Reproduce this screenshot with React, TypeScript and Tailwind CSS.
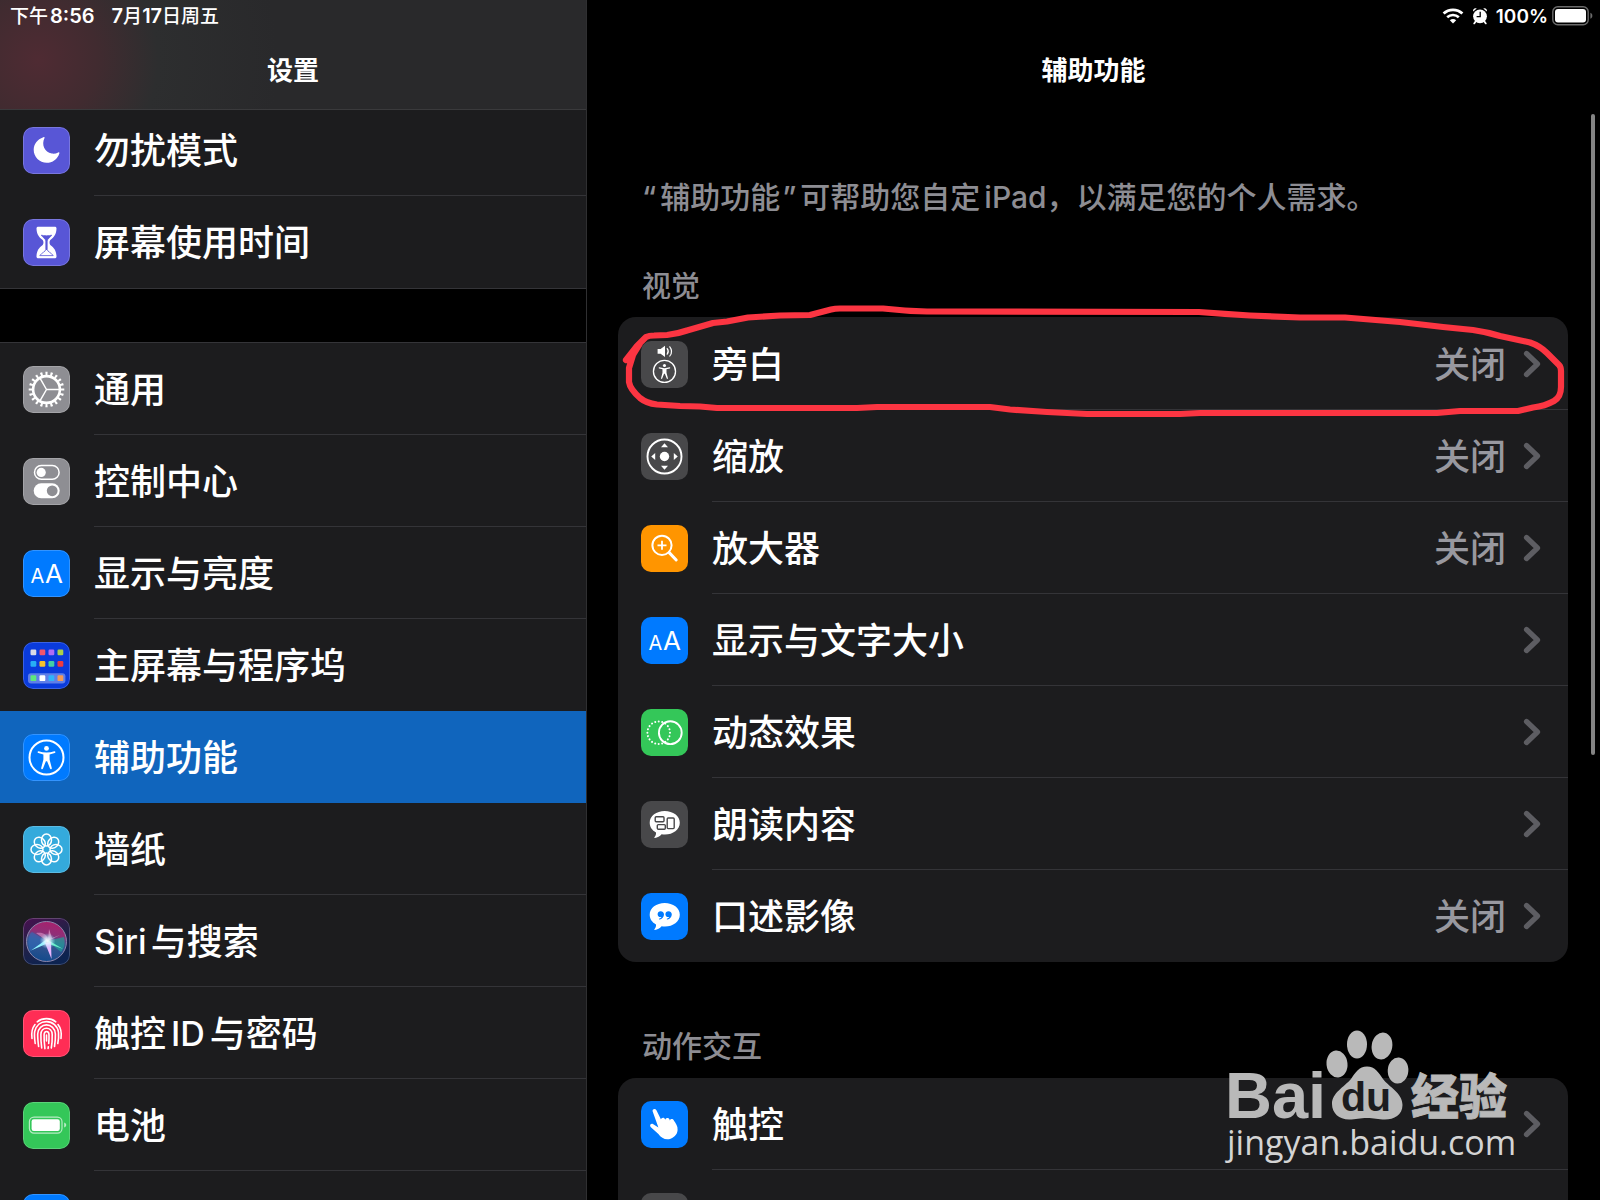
import type { ReactNode } from "react";

const dots = ["#d8dbe6", "#f2556b", "#b06cf5", "#a9d14a", "#27aef5", "#f7c12d", "#43cfa5", "#ee3b3f", "#5ee87c", "#ffffff", "#2fb4fa", "#f59a55"];
const dotX = [7.5, 16.5, 25.5, 34.5];
const dotY = [7.5, 19, 33.3];
const petals = [0, 45, 90, 135, 180, 225, 270, 315];

function Glyph({ children }: { children: ReactNode }) {
  return (
    <svg viewBox="0 0 47 47" className="block size-full" fill="none" stroke="none" aria-hidden="true">
      {children}
    </svg>
  );
}

function Tile({ color, rim, children }: { color: string; rim?: boolean; children?: ReactNode }) {
  return (
    <span className={`relative block size-[47px] shrink-0 overflow-hidden rounded-[10px] ${color}`}>
      {children}
      {rim && <span className="absolute inset-0 rounded-[10px] border border-white/20" />}
    </span>
  );
}

function Person() {
  return (
    <>
      <circle cx="23.5" cy="23.5" r="17" stroke="#fff" strokeWidth="2" />
      <circle cx="23.5" cy="14.4" r="2.4" fill="#fff" />
      <path
        d="M15.6 17.3 C20.5 18.9 26.5 18.9 31.4 17.3 C32.5 17.1 32.8 18.7 31.7 19.1 L26.6 20.4 V25.6 L28.8 34 C29 35.2 27.4 35.6 27 34.5 L24.1 27.2 H22.9 L20 34.5 C19.6 35.6 18 35.2 18.2 34 L20.4 25.6 V20.4 L15.3 19.1 C14.2 18.7 14.5 17.1 15.6 17.3 Z"
        fill="#fff"
      />
    </>
  );
}

const Moon = () => (
  <Glyph>
    <path d="M20.4 10.2 C14.2 12.4 10.7 17.3 10.7 22.8 C10.7 30 16.5 35.8 23.7 35.8 C29.4 35.8 34.6 32.2 36.4 26.2 C36.6 25.3 36 25 35.2 25.4 C33.2 26.5 31 27 28.8 26.6 C21.5 25.4 18.2 17.6 21.5 11.1 C21.8 10.4 21.2 9.9 20.4 10.2 Z" fill="#fff" />
  </Glyph>
);

const Hourglass = () => (
  <Glyph>
    <path d="M15.5 7.8 H31.5 C33 7.8 33.6 8.6 33.5 9.8 C33.2 15.5 31.2 18 27.6 20.8 C26.2 22 26.2 25 27.6 26.2 C31.2 29 33.2 31.5 33.5 37.2 C33.6 38.4 33 39.2 31.5 39.2 H15.5 C14 39.2 13.4 38.4 13.5 37.2 C13.8 31.5 15.8 29 19.4 26.2 C20.8 25 20.8 22 19.4 20.8 C15.8 18 13.8 15.5 13.5 9.8 C13.4 8.6 14 7.8 15.500 7.800 Z" fill="#fff" />
    <path d="M18.3 16.2 C20 16.8 27 16.8 28.7 16.2 C27.5 18.3 24.4 19.5 24.2 22 V30.5 C24.6 33 28 33.3 30.2 36.6 H16.8 C19 33.3 22.4 33 22.8 30.5 V22 C22.6 19.5 19.5 18.3 18.3 16.2 Z" stroke="#5856d6" strokeWidth="0.8" fill="#fff" />
    <path d="M18.6 16.2 C20 17.1 27 17.1 28.4 16.2 C27.5 18 25.6 19 24.4 21 H22.6 C21.4 19 19.5 18 18.6 16.2 Z" fill="#5856d6" />
    <path d="M23.5 20 V31" stroke="#5856d6" strokeWidth="1.2" />
  </Glyph>
);

const Gear = () => (
  <Glyph>
    <circle cx="23.5" cy="23.5" r="13.4" stroke="#fff" strokeWidth="2.6" />
    <circle cx="23.5" cy="23.5" r="16" stroke="#fff" strokeWidth="3.6" pathLength="40" strokeDasharray="0.84 1.16" strokeDashoffset="0.42" />
    <path d="M23.5 23.5 H37 M23.5 23.5 L16.7 11.7 M23.5 23.5 L16.7 35.3" stroke="#fff" strokeWidth="1.5" />
  </Glyph>
);

const Toggles = () => (
  <Glyph>
    <rect x="11.5" y="7.6" width="24.6" height="13.6" rx="6.8" stroke="#fff" strokeWidth="1.5" />
    <circle cx="18.2" cy="14.4" r="4.6" fill="#fff" />
    <rect x="10.7" y="25.3" width="26" height="15" rx="7.5" fill="#fff" />
    <circle cx="29.2" cy="32.8" r="5.4" fill="#8e8e93" />
  </Glyph>
);

const LetterSizes = () => (
  <Glyph>
    <text x="7.5" y="33.3" fontFamily="Inter, sans-serif" fontWeight="400" fontSize="20" fill="#fff">A</text>
    <text x="22" y="33.3" fontFamily="Inter, sans-serif" fontWeight="400" fontSize="26" fill="#fff">A</text>
  </Glyph>
);

const HomeGrid = () => (
  <Glyph>
    <rect x="5" y="31.2" width="37.4" height="10.4" rx="3" fill="#fff" fillOpacity="0.35" />
    {dots.map((c, i) => (
      <rect key={i} x={dotX[i % 4]} y={dotY[Math.floor(i / 4)]} width="5.8" height="5.8" rx="1.2" fill={c} />
    ))}
  </Glyph>
);

const Flower = () => (
  <Glyph>
    {petals.map((a) => (
      <ellipse key={a} cx="23.5" cy="14" rx="5" ry="6" transform={`rotate(${a} 23.5 23.5)`} stroke="#fff" strokeWidth="1.5" />
    ))}
  </Glyph>
);

const Siri = () => (
  <Glyph>
    <defs>
      <linearGradient id="siri-bg" x1="0" y1="0" x2="0.4" y2="1">
        <stop offset="0" stopColor="#4a0f50" />
        <stop offset="0.5" stopColor="#252047" />
        <stop offset="1" stopColor="#0d2350" />
      </linearGradient>
      <linearGradient id="siri-orb" x1="0.6" y1="0" x2="0.4" y2="1">
        <stop offset="0" stopColor="#a8206c" />
        <stop offset="0.3" stopColor="#8f2f78" />
        <stop offset="0.5" stopColor="#3c5690" />
        <stop offset="1" stopColor="#124a8c" />
      </linearGradient>
      <radialGradient id="siri-glow">
        <stop offset="0" stopColor="#fff" />
        <stop offset="0.4" stopColor="#dff6ff" stopOpacity="0.75" />
        <stop offset="1" stopColor="#9fd8ff" stopOpacity="0" />
      </radialGradient>
    </defs>
    <rect width="47" height="47" fill="url(#siri-bg)" />
    <circle cx="23.5" cy="23.5" r="20" fill="url(#siri-orb)" stroke="#8d86ab" strokeWidth="1" />
    <path d="M24 23 L41 19 C43 26 40 32 38 34 Z" fill="#20a59a" opacity="0.65" />
    <path d="M24 23 L7 33 C4 25 5 17 9 14 Z" fill="#2f6cbd" opacity="0.6" />
    <path d="M24 23 L13 15 C20 14 24 16 25 22 Z" fill="#f29ad0" opacity="0.55" />
    <path d="M25 23 L26 11 L29 20 L37 17 Z" fill="#f4b9de" opacity="0.6" />
    <path d="M24 21 L8 32.500 L23 26 Z" fill="#8df5ff" />
    <path d="M25 22 L40 31 L26 26 Z" fill="#66f0c8" />
    <path d="M22 25 L28.5 41 L28 24 Z" fill="#e9b6ff" />
    <circle cx="24.5" cy="23" r="8" fill="url(#siri-glow)" />
  </Glyph>
);

const Print = () => (
  <Glyph>
    <g stroke="#fff" strokeWidth="1.6" strokeLinecap="round">
      <path d="M14.2 11.800 C19.500 7.600 27.500 7.600 32.800 11.800" />
      <path d="M9 28.500 C8.100 22.500 9.200 18 12 14.500 M35 14.500 C37.800 18 38.900 22.500 38 28.500" />
      <path d="M12.200 33.500 C11.300 27 11.200 24 11.700 21.500 C13.200 15 18 11.600 23.500 11.600 C29.500 11.600 34.800 16 35.500 22.500 C35.800 26 35.500 30 34.800 33.500" />
      <path d="M15.600 36.500 C14.900 31 14.600 27 14.700 24 C15 18.500 19 14.900 23.500 14.900 C28 14.900 32.200 18.500 32.400 24 C32.500 28 32.300 32 31.500 36.500" />
      <path d="M18.700 38 C18.100 33 17.800 28 17.900 24.500 C18 20.500 20.500 18.200 23.500 18.200 C26.500 18.200 29.100 20.500 29.200 24.500 C29.300 29 29.100 33.500 28.300 38" />
      <path d="M21.900 38.600 C21.300 34 21 28.500 21.100 24.800 C21.200 22.500 22.200 21.500 23.500 21.500 C24.900 21.500 26 22.500 26 24.800 C26.100 28 26 30.500 25.700 33.500 M25.300 36.800 L25.100 38.500" />
      <path d="M23.500 25 V31" />
    </g>
  </Glyph>
);

const BatteryTile = () => (
  <Glyph>
    <rect x="6.4" y="15.1" width="32.6" height="16" rx="4.6" stroke="#fff" strokeOpacity="0.65" strokeWidth="1.2" />
    <rect x="8.6" y="17.2" width="28.2" height="11.8" rx="2.2" fill="#fff" />
    <path d="M41.2 20.6 C43.9 21.6 43.9 24.6 41.2 25.6 Z" fill="#fff" fillOpacity="0.65" />
  </Glyph>
);

const Accessibility = () => (
  <Glyph>
    <Person />
  </Glyph>
);

const VoiceOver = () => (
  <Glyph>
    <path d="M16.6 8 H19.6 L24 4.8 V16 L19.6 12.8 H16.6 Z" fill="#fff" />
    <path d="M26.2 7.6 C27.5 9.3 27.5 11.5 26.2 13.2 M28.8 5.8 C31 8.6 31 12.2 28.8 15" stroke="#fff" strokeWidth="1.2" strokeLinecap="round" />
    <g transform="translate(8.2 15.1) scale(0.65)">
      <Person />
    </g>
  </Glyph>
);

const ZoomPad = () => (
  <Glyph>
    <circle cx="23.5" cy="23.5" r="17" stroke="#fff" strokeWidth="1.9" />
    <circle cx="23.5" cy="23.5" r="4.7" fill="#fff" />
    <path d="M23.5 10.2 L27 14.2 H20 Z M23.5 36.8 L27 32.8 H20 Z M10.2 23.5 L14.2 20 V27 Z M36.8 23.5 L32.8 20 V27 Z" fill="#fff" />
  </Glyph>
);

const Magnifier = () => (
  <Glyph>
    <circle cx="21" cy="20.3" r="9.6" stroke="#fff" strokeWidth="2" />
    <path d="M21 15.8 V24.8 M16.5 20.3 H25.5" stroke="#fff" strokeWidth="1.8" />
    <path d="M28.2 27.6 L35.2 35" stroke="#fff" strokeWidth="3" strokeLinecap="round" />
  </Glyph>
);

const Motion = () => (
  <Glyph>
    <circle cx="17.7" cy="23.7" r="11.3" stroke="#fff" strokeWidth="2" strokeLinecap="round" pathLength="40" strokeDasharray="0.01 1.99" />
    <circle cx="29.3" cy="23.7" r="11.4" stroke="#fff" strokeWidth="1.9" />
  </Glyph>
);

const Bubble = () => (
  <path d="M23.7 10 C32 10 38.8 15 38.8 21.8 C38.8 28.6 32 33.6 24 33.6 C22.8 33.6 21.6 33.5 20.6 33.3 C18.8 35.3 16.4 36.8 14 37 C13.2 37 13.1 36.4 13.6 35.9 C14.6 34.7 15.2 33 15 31.4 C11.2 29.5 8.7 26 8.7 21.8 C8.7 15 15.4 10 23.7 10 Z" fill="#fff" />
);

const SpokenContent = () => (
  <Glyph>
    <Bubble />
    <g stroke="#48484a" strokeWidth="1.4">
      <rect x="14.2" y="15.8" width="8.8" height="5" rx="1" />
      <rect x="16.3" y="23.6" width="8" height="4.6" rx="1" />
      <rect x="26.2" y="17" width="7" height="10.6" rx="1" />
    </g>
  </Glyph>
);

const Quotes = () => (
  <Glyph>
    <Bubble />
    <path d="M19.6 18.2 C21.8 18.2 23 19.8 23 21.6 C23 24.2 21 26.3 18.6 26.6 C17.9 26.6 17.8 25.9 18.4 25.6 C19.5 25.1 20.2 24.4 20.4 23.9 C18.2 24.6 16.6 23 16.6 21.2 C16.6 19.5 17.9 18.2 19.6 18.2 Z" fill="#007aff" />
    <path d="M27.4 18.2 C29.6 18.2 30.8 19.8 30.8 21.6 C30.8 24.2 28.8 26.3 26.4 26.6 C25.7 26.6 25.6 25.9 26.2 25.6 C27.3 25.1 28 24.4 28.2 23.9 C26 24.6 24.4 23 24.4 21.2 C24.4 19.5 25.7 18.2 27.4 18.2 Z" fill="#007aff" />
  </Glyph>
);

const Hand = () => (
  <Glyph>
    <path d="M11.6 10.2 C11.2 8 14.3 7 15.3 9.1 L20 18.6 C20.2 16.4 23 15.9 23.9 18 L24.2 18.8 C24.8 16.6 27.9 16.3 28.6 18.6 L28.8 19.4 C29.7 17.4 32.4 17.6 33 19.8 C34.8 22.6 36.9 25 36.6 29 C36.3 34 32.5 37 28 38.2 C23.5 38.9 20 36.6 17.4 33 L9.6 25.9 C8.3 24 9.8 22.3 11.9 22.9 L17.4 26.4 Z" fill="#fff" />
  </Glyph>
);

type Item = { label?: ReactNode; name?: string; tile: ReactNode; value?: string; current?: boolean };

function SideRow({ label, name, tile, current, divider, first }: Item & { divider: boolean; first?: boolean }) {
  return (
    <li className={first ? "-mt-1.5" : ""}>
      <button
        type="button"
        aria-label={name}
        aria-current={current ? "page" : undefined}
        className={`flex h-[92px] w-full items-center pl-[23px] text-left ${current ? "bg-[#1065bd]" : ""}`}
      >
        {tile}
        <span className={`ml-6 flex h-full flex-1 items-center border-b pt-[3px] text-4xl whitespace-nowrap ${divider ? "border-[#343438]" : "border-transparent"}`}>
          {label}
        </span>
      </button>
    </li>
  );
}

function Chevron() {
  return (
    <svg viewBox="0 0 18 28" className="h-7 w-[18px] shrink-0" fill="none" aria-hidden="true">
      <path d="M3.5 3.5 L14.5 14 L3.5 24.5" stroke="#5d5d62" strokeWidth="5.2" strokeLinecap="round" strokeLinejoin="round" />
    </svg>
  );
}

function MainRow({ label, name, tile, value, divider }: Item & { divider: boolean }) {
  return (
    <li>
      <button type="button" aria-label={name} className="flex h-[92px] w-full items-center pl-[23px] text-left">
        {tile}
        <span className={`ml-6 flex h-full flex-1 items-center gap-[17px] border-b pr-[27px] text-4xl whitespace-nowrap ${divider ? "border-[#343438]" : "border-transparent"}`}>
          <span className="flex-1 pt-[3px]">{label}</span>
          {value && <span className="pt-[3px] text-[#98989f]">{value}</span>}
          {label && <Chevron />}
        </span>
      </button>
    </li>
  );
}

const topItems: Item[] = [
  { label: "勿扰模式", tile: <Tile rim color="bg-[#5856d6]"><Moon /></Tile> },
  { label: "屏幕使用时间", tile: <Tile rim color="bg-[#5856d6]"><Hourglass /></Tile> },
];

const sideItems: Item[] = [
  { label: "通用", tile: <Tile rim color="bg-[#8e8e93]"><Gear /></Tile> },
  { label: "控制中心", tile: <Tile rim color="bg-[#8e8e93]"><Toggles /></Tile> },
  { label: "显示与亮度", tile: <Tile rim color="bg-[#007aff]"><LetterSizes /></Tile> },
  { label: "主屏幕与程序坞", tile: <Tile rim color="bg-[#0a3bdc]"><HomeGrid /></Tile> },
  { label: "辅助功能", current: true, tile: <Tile rim color="bg-[#007aff]"><Accessibility /></Tile> },
  { label: "墙纸", tile: <Tile rim color="bg-[#34aadc]"><Flower /></Tile> },
  { label: <><span className="mr-1 text-[34px]">Siri</span>与搜索</>, tile: <Tile rim color="bg-[#252047]"><Siri /></Tile> },
  { label: <>触控<span className="mx-[5px] text-[34px]">ID</span>与密码</>, tile: <Tile rim color="bg-[#ff2d55]"><Print /></Tile> },
  { label: "电池", tile: <Tile rim color="bg-[#34c759]"><BatteryTile /></Tile> },
  { name: "隐私", tile: <Tile rim color="bg-[#007aff]" /> },
];

const visionItems: Item[] = [
  { label: "旁白", value: "关闭", tile: <Tile color="bg-[#48484a]"><VoiceOver /></Tile> },
  { label: "缩放", value: "关闭", tile: <Tile color="bg-[#48484a]"><ZoomPad /></Tile> },
  { label: "放大器", value: "关闭", tile: <Tile color="bg-[#ff9500]"><Magnifier /></Tile> },
  { label: "显示与文字大小", tile: <Tile color="bg-[#007aff]"><LetterSizes /></Tile> },
  { label: "动态效果", tile: <Tile color="bg-[#34c759]"><Motion /></Tile> },
  { label: "朗读内容", tile: <Tile color="bg-[#48484a]"><SpokenContent /></Tile> },
  { label: "口述影像", value: "关闭", tile: <Tile color="bg-[#007aff]"><Quotes /></Tile> },
];

const motorItems: Item[] = [
  { label: "触控", tile: <Tile color="bg-[#007aff]"><Hand /></Tile> },
  { name: "切换控制", tile: <Tile color="bg-[#48484a]" /> },
];

function StatusIcons() {
  return (
    <div className="flex h-8 items-center justify-end pr-1.5 text-[19px] font-semibold">
      <svg viewBox="0 0 22 16" className="mr-2 h-4 w-[22px]" fill="none" aria-label="Wi-Fi" role="img">
        <path d="M1.6 5.6 C6.8 0.6 15.2 0.6 20.4 5.6" stroke="#fff" strokeWidth="2.8" />
        <path d="M5.2 9.3 C8.4 6.2 13.6 6.2 16.8 9.3" stroke="#fff" strokeWidth="2.6" />
        <path d="M11 15.4 L7.8 12.2 C9.6 10.5 12.4 10.5 14.2 12.2 Z" fill="#fff" />
      </svg>
      <svg viewBox="0 0 16 18" className="mr-2 h-[18px] w-4" fill="none" aria-label="Alarm" role="img">
        <circle cx="8" cy="9.3" r="6.9" fill="#fff" />
        <path d="M1.2 4.4 C0.4 2.4 2.6 0.4 4.7 1.4 Z M14.8 4.4 C15.6 2.4 13.4 0.4 11.3 1.4 Z" fill="#fff" />
        <path d="M3.6 14.4 L2.2 16.4 M12.4 14.4 L13.8 16.4" stroke="#fff" strokeWidth="1.8" strokeLinecap="round" />
        <path d="M8.2 4.8 V9.6 H4.6" stroke="#000" strokeWidth="1.3" />
      </svg>
      <span>100%</span>
      <svg viewBox="0 0 42 20" className="ml-1 h-5 w-[42px]" fill="none" aria-label="Battery" role="img">
        <rect x="0.8" y="0.8" width="35.4" height="18" rx="5" stroke="#6b6b6b" strokeWidth="1.4" />
        <rect x="3" y="3" width="31" height="13.6" rx="3" fill="#fff" />
        <path d="M38.4 6.8 C41 7.8 41 11.8 38.4 12.8 Z" fill="#6b6b6b" />
      </svg>
    </div>
  );
}

function RedLoop() {
  return (
    <svg viewBox="0 0 950 92" preserveAspectRatio="none" className="pointer-events-none absolute top-0 left-0 h-[92px] w-full overflow-visible" fill="none" aria-hidden="true">
      <path
        transform="translate(-618 -317)"
        d="M626 360 L637 346 L646 337 Q649 335.5 654 335.5 L667 335 Q677 334 687 330.5 L713 323 L727 321.5 L748 317.5 L780 315.5 L810 315 L831 309.5 Q835 308.5 840 308.5 L883 308.5 Q905 311 927 311.5 L1199 312 Q1225 314 1250 315.5 L1300 317.5 H1345 L1400 322 L1443 327 L1473 330 Q1487 332 1500 336 L1530 342.5 Q1540 346 1547 353 L1559 365 Q1561 367 1561 371 V387 Q1561 397 1554 401 Q1545 406 1533 407.5 L1518 411 H1460 L1437 413 H1200 L1180 414 H1087 L1047 412 L1010 409.5 L990 407 H877 L857 408 H717 L700 406.5 L680 406 L657 404.5 Q646 403 640 398 Q630 389 629 382 V368 L633 355 L641 342"
        stroke="#fc3542"
        strokeWidth="6.2"
        strokeLinecap="round"
        strokeLinejoin="round"
      />
    </svg>
  );
}

function Watermark() {
  return (
    <svg viewBox="0 0 292 140" className="pointer-events-none absolute right-12 -bottom-[105px] h-[140px] w-[292px] overflow-visible" aria-hidden="true">
      <g fill="#b9b9b9">
        <ellipse cx="109" cy="37" rx="10.5" ry="13.5" transform="rotate(-6 109 37)" />
        <ellipse cx="129" cy="17.5" rx="10" ry="14" />
        <ellipse cx="154" cy="19" rx="10.3" ry="13.5" transform="rotate(10 154 19)" />
        <ellipse cx="170" cy="43.500" rx="10.300" ry="13" transform="rotate(4 170 44)" />
        <path d="M139 39.500 C147 39.500 151 46 155 52 C161 60 174.500 66 174.500 78 C174.500 88 166 92.500 157 92.500 C150 92.500 146 91 139 91 C132 91 128 92.500 121 92.500 C111 92.500 104 86 104 77 C104 66 116 60 123 52 C127 46 131 39.500 139 39.500 Z" />
        <text x="-3" y="91" fontFamily="'Liberation Sans', Arial, sans-serif" fontWeight="700" fontSize="65">Bai</text>
        <text x="183" y="87" fontFamily="'Noto Sans CJK SC', sans-serif" fontWeight="900" fontSize="48" stroke="#b9b9b9" strokeWidth="0.8">经验</text>
      </g>
      <text x="113" y="84" fontFamily="'Liberation Sans', Arial, sans-serif" fontWeight="700" fontSize="41" fill="#1c1c1e">du</text>
      <text x="-1" y="128" fontFamily="'Open Sans', 'Noto Sans', sans-serif" fontSize="34" fill="#d4d4d4">jingyan.baidu.com</text>
    </svg>
  );
}

export default function App() {
  return (
    <div className="grid h-screen grid-cols-[587fr_1013fr] overflow-hidden bg-black font-['Inter','Noto_Sans_CJK_SC',sans-serif] leading-none font-medium text-white">
      <aside className="overflow-hidden border-r border-[#2f2f31]">
        <header className="relative z-10 h-[110px] border-b border-[#3a3a3c] bg-[#29292b] bg-[radial-gradient(circle_at_38px_60px,#4f2b33_0,#412b30_60px,#2d2e2f_120px,#29292b_240px)]">
          <div className="flex h-8 items-center gap-[17px] pl-[10px] text-[19px] font-semibold">
            <span className="flex items-center gap-0.5">
              <span className="font-medium">下午</span>
              <span className="text-xl">8:56</span>
            </span>
            <span className="flex items-center">
              <span className="text-xl">7</span>
              <span className="font-medium">月</span>
              <span className="text-xl">17</span>
              <span className="font-medium">日周五</span>
            </span>
          </div>
          <h2 className="mt-[26px] text-center text-[26px] font-semibold">设置</h2>
        </header>
        <nav aria-label="设置">
          <ul className="border-b border-[#343438] bg-[#1c1c1e]">
            {topItems.map((item, i) => (
              <SideRow key={i} {...item} first={i === 0} divider={i < topItems.length - 1} />
            ))}
          </ul>
          <ul className="mt-[53px] border-t border-[#343438] bg-[#1c1c1e]">
            {sideItems.map((item, i) => (
              <SideRow key={i} {...item} divider={!item.current && !sideItems[i + 1]?.current} />
            ))}
          </ul>
        </nav>
      </aside>

      <main className="relative overflow-hidden">
        <StatusIcons />
        <h1 className="mt-[26px] text-center text-[26px] font-semibold">辅助功能</h1>
        <div className="pr-8 pl-[31px]">
          <p className="mt-[97px] pl-6 text-[30px] leading-8 text-[#8d8d93]">
            <span className="mr-1">“</span>辅助功能<span className="mr-1 ml-0.5">”</span>可帮助您自定<span className="ml-1">iPad</span>，以满足您的个人需求。
          </p>
          <h3 className="mt-[58px] pl-6 text-[29px] leading-8 text-[#8d8d93]">视觉</h3>
          <div className="relative mt-3.5">
            <ul className="rounded-[18px] bg-[#1c1c1e] pt-px">
              {visionItems.map((item, i) => (
                <MainRow key={i} {...item} divider={i < visionItems.length - 1} />
              ))}
            </ul>
            <RedLoop />
          </div>
          <div className="relative">
            <h3 className="mt-[68px] pl-6 text-[30px] leading-8 text-[#8d8d93]">动作交互</h3>
            <Watermark />
          </div>
          <ul className="mt-4 rounded-[18px] bg-[#1c1c1e]">
            {motorItems.map((item, i) => (
              <MainRow key={i} {...item} divider={i < motorItems.length - 1} />
            ))}
          </ul>
        </div>
        <div className="absolute top-[114px] right-[5px] h-[53.4%] w-1 rounded-full bg-[#848484]" />
      </main>
    </div>
  );
}
